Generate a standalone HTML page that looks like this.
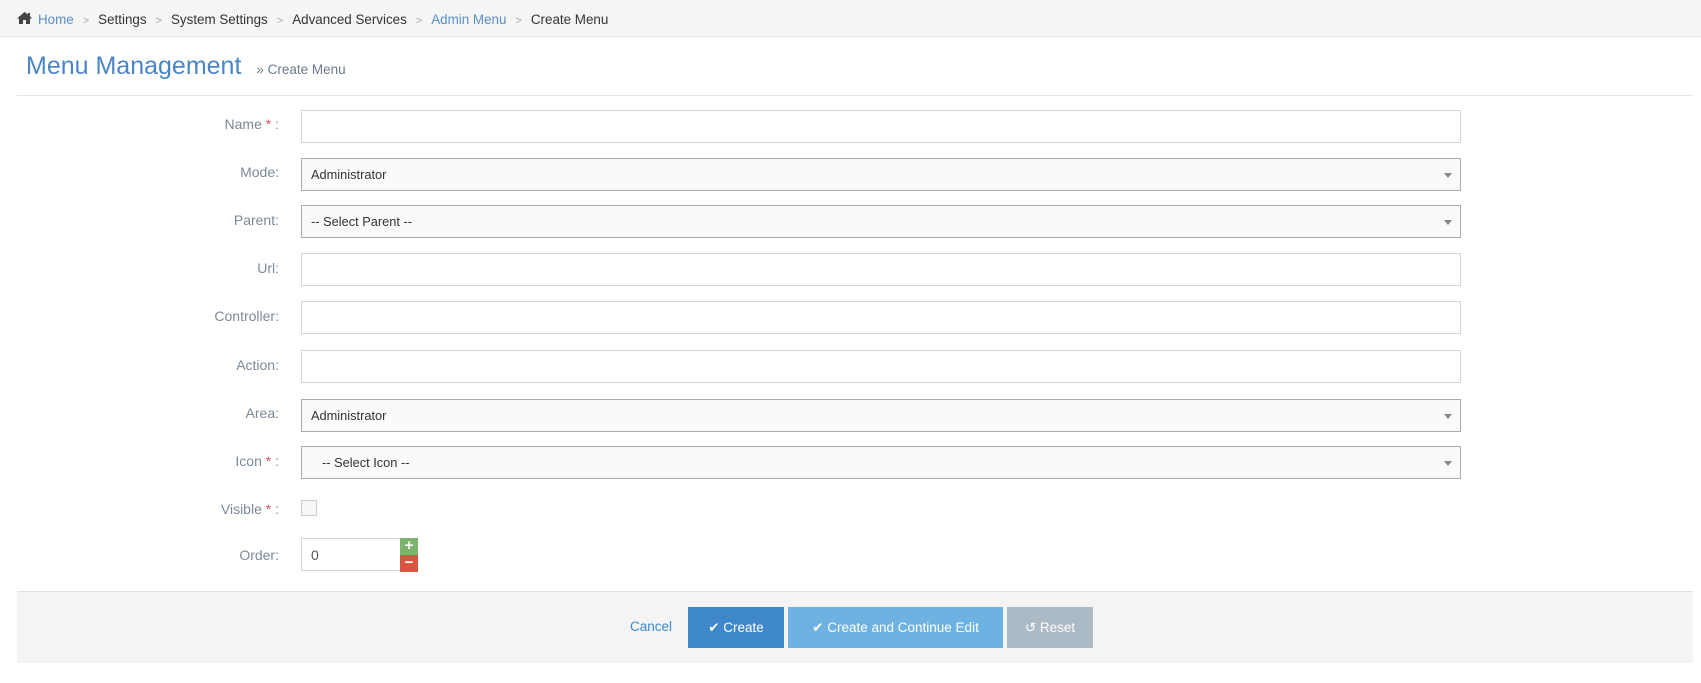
<!DOCTYPE html>
<html><head><meta charset="utf-8"><style>
*{box-sizing:border-box}
body{margin:0;width:1701px;height:683px;background:#fff;font-family:"Liberation Sans",sans-serif;font-size:14px;color:#333;position:relative;overflow:hidden}
.bc{position:absolute;left:0;top:0;width:1701px;height:37px;background:#f5f5f5;border-bottom:1px solid #e5e5e5;padding:11px 0 0 16px;font-size:13.4px;color:#333}
.bc a{color:#5b8fc7;text-decoration:none}
.bc .s{color:#aaa;margin:0 9px;font-size:11px}
.title{position:absolute;left:26px;top:52px;font-size:25px;color:#4a85c5;font-weight:300}
.title small{font-size:13.5px;color:#6a7a8c;margin-left:8px}
.hr{position:absolute;left:17px;right:8px;top:95px;border-top:1px solid #e5e5e5}
.lbl{position:absolute;right:1422px;text-align:right;color:#7a8a99;font-size:14px}
.lbl i{font-style:normal;color:#e0525a}
.in{position:absolute;left:301px;width:1160px;height:33px;border:1px solid #d5d5d5;background:#fff;padding:8px 9px;font-size:12.8px}
.sel{background:#fafafa;border-color:#aaa}
.sel:after{content:"";position:absolute;right:8px;top:14px;border-left:4px solid transparent;border-right:4px solid transparent;border-top:5px solid #888}
.foot{position:absolute;left:17px;right:8px;top:591px;height:72px;background:#f4f4f4;border-top:1px solid #e0e0e0}
.btn{position:absolute;top:607px;height:41px;color:#fff;font-size:13.5px;text-align:center;line-height:41px}
</style></head><body>
<div class="bc"><svg width="17" height="14" viewBox="0 0 17 14" style="vertical-align:-1px;margin-right:5px"><path d="M8.5 1L1 7.5h2V13h4V9h3v4h4V7.5h2L14 5V2h-2v1.5z" fill="#444"/></svg><a>Home</a><span class="s">&gt;</span>Settings<span class="s">&gt;</span>System Settings<span class="s">&gt;</span>Advanced Services<span class="s">&gt;</span><a>Admin Menu</a><span class="s">&gt;</span>Create Menu</div>
<div class="title">Menu Management <small>» Create Menu</small></div>
<div class="hr"></div>

<div class="lbl" style="top:116px">Name <i>*</i> :</div><div class="in" style="top:110px"></div>
<div class="lbl" style="top:164px">Mode:</div><div class="in sel" style="top:158px">Administrator</div>
<div class="lbl" style="top:212px">Parent:</div><div class="in sel" style="top:205px">-- Select Parent --</div>
<div class="lbl" style="top:260px">Url:</div><div class="in" style="top:253px"></div>
<div class="lbl" style="top:308px">Controller:</div><div class="in" style="top:301px"></div>
<div class="lbl" style="top:357px">Action:</div><div class="in" style="top:350px"></div>
<div class="lbl" style="top:405px">Area:</div><div class="in sel" style="top:399px">Administrator</div>
<div class="lbl" style="top:453px">Icon <i>*</i> :</div><div class="in sel" style="top:446px;padding-left:20px">-- Select Icon --</div>
<div class="lbl" style="top:501px">Visible <i>*</i> :</div>
<div style="position:absolute;left:301px;top:500px;width:16px;height:16px;border:1px solid #ccc;background:#f7f7f7"></div>
<div class="lbl" style="top:547px">Order:</div>
<div class="in" style="top:538px;width:100px;font-size:14px;color:#555">0</div>
<div style="position:absolute;left:400px;top:538px;width:18px;height:17px;background:#7cb46b;color:#fff;font-weight:bold;text-align:center;line-height:16px;font-size:15px">+</div>
<div style="position:absolute;left:400px;top:555px;width:18px;height:17px;background:#d9553f;color:#fff;font-weight:bold;text-align:center;line-height:16px;font-size:15px">−</div>

<div class="foot"></div>
<div style="position:absolute;left:630px;top:619px;color:#3a8ad0;font-size:13.5px">Cancel</div>
<div class="btn" style="left:688px;width:96px;background:#3f87cb">✔ Create</div>
<div class="btn" style="left:788px;width:215px;background:#6db2e0">✔ Create and Continue Edit</div>
<div class="btn" style="left:1007px;width:86px;background:#acbac6">↺ Reset</div>
</body></html>
